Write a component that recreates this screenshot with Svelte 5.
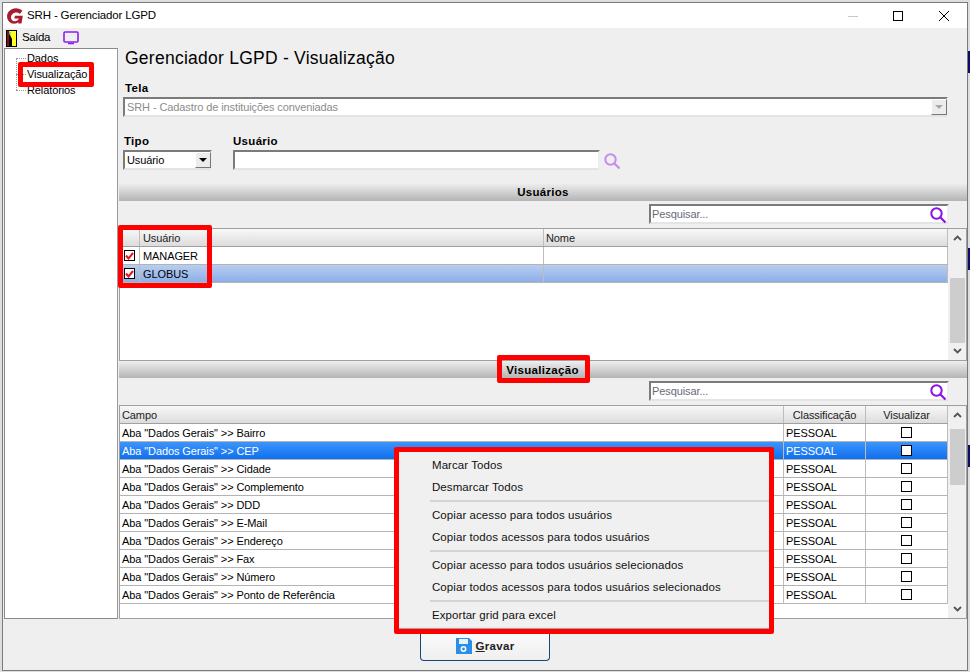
<script>
  const campos = ['Bairro','CEP','Cidade','Complemento','DDD','E-Mail','Endereço','Fax','Número','Ponto de Referência'];
  const menu = [['Marcar Todos','Desmarcar Todos'],['Copiar acesso para todos usuários','Copiar todos acessos para todos usuários'],['Copiar acesso para todos usuários selecionados','Copiar todos acessos para todos usuários selecionados'],['Exportar grid para excel']];
</script>

{#snippet lens(cls)}
  <svg class={cls} width="18" height="18" viewBox="0 0 18 18"><circle cx="7.5" cy="7.5" r="5.2" fill="none" stroke="currentColor" stroke-width="2"/><path d="M11.5 11.5 16.5 16.5" stroke="currentColor" stroke-width="2.2"/></svg>
{/snippet}
{#snippet scrollbar()}
  <div class="vscroll">
    <svg class="arrow" width="9" height="6" viewBox="0 0 9 6"><path d="M1 5 4.5 1.5 8 5" fill="none" stroke="#555" stroke-width="1.8"/></svg>
    <div class="thumb"></div>
    <div class="grow"></div>
    <svg class="arrow" width="9" height="6" viewBox="0 0 9 6"><path d="M1 1 4.5 4.5 8 1" fill="none" stroke="#555" stroke-width="1.8"/></svg>
  </div>
{/snippet}

<div class="page">
  <div class="desk d1"></div>
  <div class="desk d2"></div>
  <div class="desk d3"></div>
  <div class="window">
    <div class="titlebar">
      <svg class="logo" width="18" height="18" viewBox="0 0 17 17"><path d="M15.500 3.600C14 2 11.800 1.200 9.200 1.200 4.800 1.200 1 4.600 1 9c0 3.800 3 6.800 6.800 6.800 1.600 0 3-.5 4-1.300l-.2 1.200h3l1.300-7.400H8.400l-.5 2.500h4.200c-.5 1.600-2 2.600-3.600 2.600-2.200 0-3.800-1.600-3.800-3.600 0-2.600 2.400-4.700 5-4.700 1.400 0 2.600.5 3.400 1.400z" fill="#a91c30"/></svg>
      <span class="wintitle">SRH - Gerenciador LGPD</span>
      <div class="winbtns">
        <svg class="min" width="10" height="10" viewBox="0 0 10 10"><path d="M0 5.500H10" stroke="#c8c8c8"/></svg>
        <svg width="10" height="10" viewBox="0 0 10 10"><rect x=".5" y=".5" width="9" height="9" fill="none" stroke="#000"/></svg>
        <svg width="10" height="10" viewBox="0 0 10 10"><path d="M0 0 10 10M10 0 0 10" stroke="#000"/></svg>
      </div>
    </div>
    <div class="toolbar">
      <svg width="11" height="17" viewBox="0 0 11 17"><rect width="11" height="17" fill="#000"/><rect x="1" y="1" width="2" height="15" fill="#8a1010"/><path d="M3 1h7v15H6V9L3.500 4z" fill="#ffff20"/><path d="M3.500 2h1v3h-1z" fill="#20d0f0"/></svg>
      <span class="saida">Saída</span>
      <svg class="tv" width="16" height="14" viewBox="0 0 16 14"><rect x="1" y="1" width="14" height="10" rx="1" fill="none" stroke="#8a1ff0" stroke-width="1.600"/><path d="M5 12.500H11" stroke="#8a1ff0" stroke-width="1.500"/></svg>
    </div>
    <div class="content">
      <aside class="tree">
        <div class="guide"></div>
        <div class="node">Dados</div>
        <div class="node">Visualização</div>
        <div class="node">Relatórios</div>
      </aside>
      <main class="main">
        <h1>Gerenciador LGPD - Visualização</h1>
        <div class="lbl tela">Tela</div>
        <div class="combo disabled">
          <span>SRH - Cadastro de instituições conveniadas</span>
          <span class="dropbtn"><i></i></span>
        </div>
        <div class="filters">
          <div class="tipo">
            <div class="lbl">Tipo</div>
            <div class="combo small"><span>Usuário</span><span class="dropbtn dark"><i></i></span></div>
          </div>
          <div class="usr">
            <div class="lbl">Usuário</div>
            <div class="usrrow"><div class="input"></div>{@render lens('lens light')}</div>
          </div>
        </div>

        <div class="section first">Usuários</div>
        <div class="searchrow"><div class="search"><span>Pesquisar...</span>{@render lens('lens strong')}</div></div>
        <div class="gridwrap users">
          <div class="grid">
            <div class="hrow"><div class="c chk"></div><div class="c u">Usuário</div><div class="c n">Nome</div></div>
            <div class="row"><div class="c chk"><span class="box"><svg width="9" height="8" viewBox="0 0 9 8"><path d="M1 3.500 3.500 6.500 8 1" fill="none" stroke="#e8121c" stroke-width="2"/></svg></span></div><div class="c u">MANAGER</div><div class="c n"></div></div>
            <div class="row picked"><div class="c chk"><span class="box"><svg width="9" height="8" viewBox="0 0 9 8"><path d="M1 3.500 3.500 6.500 8 1" fill="none" stroke="#e8121c" stroke-width="2"/></svg></span></div><div class="c u">GLOBUS</div><div class="c n"></div></div>
          </div>
          <div class="sb-holder">{@render scrollbar()}</div>
        </div>

        <div class="section second">Visualização</div>
        <div class="searchrow"><div class="search"><span>Pesquisar...</span>{@render lens('lens strong')}</div></div>
        <div class="gridwrap fields">
          <div class="grid">
            <div class="hrow"><div class="c campo">Campo</div><div class="c cl">Classificação</div><div class="c vis">Visualizar</div></div>
            {#each campos as c, i}
              <div class="row" class:sel={i === 1}>
                <div class="c campo">Aba "Dados Gerais" &gt;&gt; {c}</div>
                <div class="c cl">PESSOAL</div>
                <div class="c vis"><span class="box"></span></div>
              </div>
            {/each}
          </div>
          <div class="sb-holder">{@render scrollbar()}</div>
        </div>
      </main>
    </div>
    <footer class="footer">
      <button class="save">
        <svg width="16" height="16" viewBox="0 0 16 16"><path d="M0 0h13l3 3v13H0z" fill="#2b8fe6"/><rect x="3" y="1" width="9" height="5" fill="#e8f2fb"/><circle cx="7.500" cy="11" r="2.200" fill="none" stroke="#fff" stroke-width="1.500"/></svg>
        <span><u>G</u>ravar</span>
      </button>
    </footer>
  </div>

  <div class="hl hl-tree"></div>
  <div class="hl hl-users"></div>
  <div class="hl hl-section"></div>

  <div class="ctx">
    {#each menu as group, g}
      {#if g > 0}<div class="sep"></div>{/if}
      {#each group as item}<div class="item">{item}</div>{/each}
    {/each}
  </div>
</div>

<style>
  :global(body) { margin: 0; background: #dedede; }
  .page { position: relative; width: 970px; height: 672px; overflow: hidden; font: 11px/1 "Liberation Sans", Arial, sans-serif; color: #000; letter-spacing: -.1px; }
  .desk { position: absolute; left: 968px; width: 2px; height: 22px; background: #0a0a6a; }
  .d1 { top: 51px; }
  .d2 { top: 248px; }
  .d3 { top: 445px; }
  .window { box-sizing: border-box; width: 966px; height: 669px; margin: 2px 0 0 2px; border: 1px solid #7a7a7a; background: #efefef; display: flex; flex-direction: column; position: relative; }
  .titlebar { height: 25px; background: #fff; display: flex; align-items: center; padding-left: 3px; flex: none; }
  .logo { margin-right: 3px; }
  .wintitle { font-size: 11.500px; letter-spacing: -.15px; }
  .winbtns { margin-left: auto; display: flex; align-items: center; gap: 36px; padding-right: 18px; }
  .min { margin-right: -1px; }
  .toolbar { height: 20px; flex: none; display: flex; align-items: center; padding-left: 3px; }
  .saida { margin-left: 5px; font-size: 11.500px; letter-spacing: -.4px; }
  .tv { margin-left: 13px; }
  .content { display: flex; height: 571px; flex: none; }
  .tree { position: relative; box-sizing: border-box; width: 114px; margin-left: 1px; background: #fff; border: 1px solid #8a8a8a; border-right-color: #9a9a9a; padding: 1px 0 0 22px; flex: none; }
  .guide { position: absolute; left: 11px; top: 9px; height: 32px; width: 8px; border-left: 1px dotted #999; }
  .node { position: relative; height: 16px; line-height: 16px; }
  .node::before { content: ""; position: absolute; left: -11px; top: 8px; width: 10px; border-top: 1px dotted #999; }
  .main { flex: 1; min-width: 0; padding-left: 1px; display: flex; flex-direction: column; }
  h1 { margin: 0; padding: 0 0 0 6px; height: 25px; box-sizing: border-box; font: 17.500px/20px "Liberation Sans", sans-serif; letter-spacing: .25px; }
  .lbl { font-weight: bold; font-size: 11.500px; height: 13px; line-height: 13px; letter-spacing: .3px; }
  .tela { margin: 9px 0 2px 6px; }
  .combo { box-sizing: border-box; height: 20px; background: #fff; border: 2px solid #7b7b7b; border-right-color: #eee; border-bottom-color: #e4e4e4; display: flex; align-items: center; padding-left: 2px; justify-content: space-between; }
  .combo.disabled { width: 825px; margin-left: 4px; color: #8c8c8c; }
  .dropbtn { width: 16px; height: 16px; background: #ececec; border: 1px solid #fff; border-right-color: #777; border-bottom-color: #777; box-sizing: border-box; display: flex; align-items: center; justify-content: center; margin-right: -1px; }
  .dropbtn i { width: 0; height: 0; border: 4px solid transparent; border-top: 4px solid #a8a8a8; border-bottom: 0; }
  .dropbtn.dark i { border-top-color: #000; }
  .filters { display: flex; margin: 18px 0 0 4px; }
  .tipo { width: 110px; flex: none; }
  .filters .lbl { margin: 0 0 2px 1px; }
  .usr .lbl { margin-left: 0; }
  .combo.small { width: 89px; }
  .usrrow { display: flex; align-items: flex-start; gap: 3px; }
  .input { box-sizing: border-box; width: 367px; height: 20px; background: #fff; border: 2px solid #7b7b7b; border-right-color: #eee; border-bottom-color: #e4e4e4; }
  .lens { display: block; }
  .lens.light { color: #c58cf0; margin-top: 2px; }
  .lens.strong { color: #8c10e8; position: absolute; right: 0; top: 0; }
  .section { flex: none; background: linear-gradient(#efefef, #b4b4b4); text-align: center; font-weight: bold; font-size: 11.500px; letter-spacing: .3px; }
  .section.first { height: 18px; line-height: 19px; margin-top: 13px; }
  .section.second { height: 17px; line-height: 18px; padding-right: 1px; }
  .searchrow { height: 27px; flex: none; padding: 3px 0 0 530px; box-sizing: border-box; }
  .search { position: relative; box-sizing: border-box; width: 300px; height: 20px; background: #fff; border: 2px solid #7b7b7b; border-right-color: #eee; border-bottom-color: #e4e4e4; color: #6a6a78; line-height: 17px; padding-left: 1px; }
  .gridwrap { display: flex; box-sizing: border-box; background: #fff; border: 1px solid #a0a0a0; flex: none; }
  .gridwrap.users { height: 133px; }
  .gridwrap.fields { height: 214px; }
  .grid { width: 828px; flex: none; }
  .hrow, .row { display: flex; box-sizing: border-box; height: 18px; border-bottom: 1px solid #b4b4b4; line-height: 19px; }
  .hrow { background: linear-gradient(#f8f8f8, #dcdcdc); border-bottom-color: #a0a0a0; color: #222; }
  .c { box-sizing: border-box; padding-left: 2px; border-right: 1px solid #bdbdbd; white-space: nowrap; overflow: hidden; height: 17px; }
  .chk { width: 20px; padding: 0; display: flex; align-items: center; justify-content: center; }
  .u, .n { width: 404px; }
  .u { padding-left: 3px; }
  .campo { width: 664px; }
  .cl { width: 82px; }
  .hrow .cl, .hrow .vis { text-align: center; padding: 0; }
  .vis { width: 82px; padding: 0; display: flex; justify-content: center; align-items: center; }
  .hrow .vis { display: block; }
  .box { box-sizing: border-box; width: 11px; height: 11px; border: 1px solid #000; background: #fff; display: flex; align-items: center; justify-content: center; }
  .picked { background: linear-gradient(#b8cef0, #8eaee8); }
  .sel { background: linear-gradient(#3d95fb, #0f6fee); color: #fff; }
  .sb-holder { flex: 1; display: flex; min-width: 0; }
  .vscroll { flex: 1; background: #f0f0f0; display: flex; flex-direction: column; align-items: center; padding: 6px 1px 6px; }
  .arrow { flex: none; }
  .thumb { width: 15px; background: #cdcdcd; flex: none; }
  .users .thumb { height: 65px; margin-top: 37px; }
  .fields .thumb { height: 56px; margin-top: 11px; }
  .grow { flex: 1; }
  .footer { flex: 1; position: relative; }
  .save { position: absolute; left: 417px; top: 3px; box-sizing: border-box; width: 130px; height: 39px; padding: 9px 0 0; background: linear-gradient(#fff, #efefef); border: 1px solid #19457a; border-top: 0; border-radius: 0 0 4px 4px; font: bold 11.500px "Liberation Sans", sans-serif; letter-spacing: .3px; display: flex; align-items: center; justify-content: center; gap: 4px; color: #222; }
  .hl { position: absolute; box-sizing: border-box; border: 5px solid #f00; border-radius: 2px; pointer-events: none; }
  .hl-tree { left: 18px; top: 62px; width: 76px; height: 25px; }
  .hl-users { left: 118px; top: 225px; width: 94px; height: 63px; }
  .hl-section { left: 497px; top: 355px; width: 93px; height: 28px; }
  .ctx { position: absolute; box-sizing: border-box; left: 394px; top: 447px; width: 380px; height: 187px; background: #f0f0f0; border: 5px solid #f00; border-radius: 2px; padding: 2px 0 0 31px; box-shadow: inset 0 -2px 1px -1px #999; }
  .item { height: 22px; line-height: 22px; padding-left: 2px; font-size: 11.500px; letter-spacing: .07px; color: #111; }
  .sep { height: 2px; background: #d4d4d4; margin: 2px 0; }
</style>
